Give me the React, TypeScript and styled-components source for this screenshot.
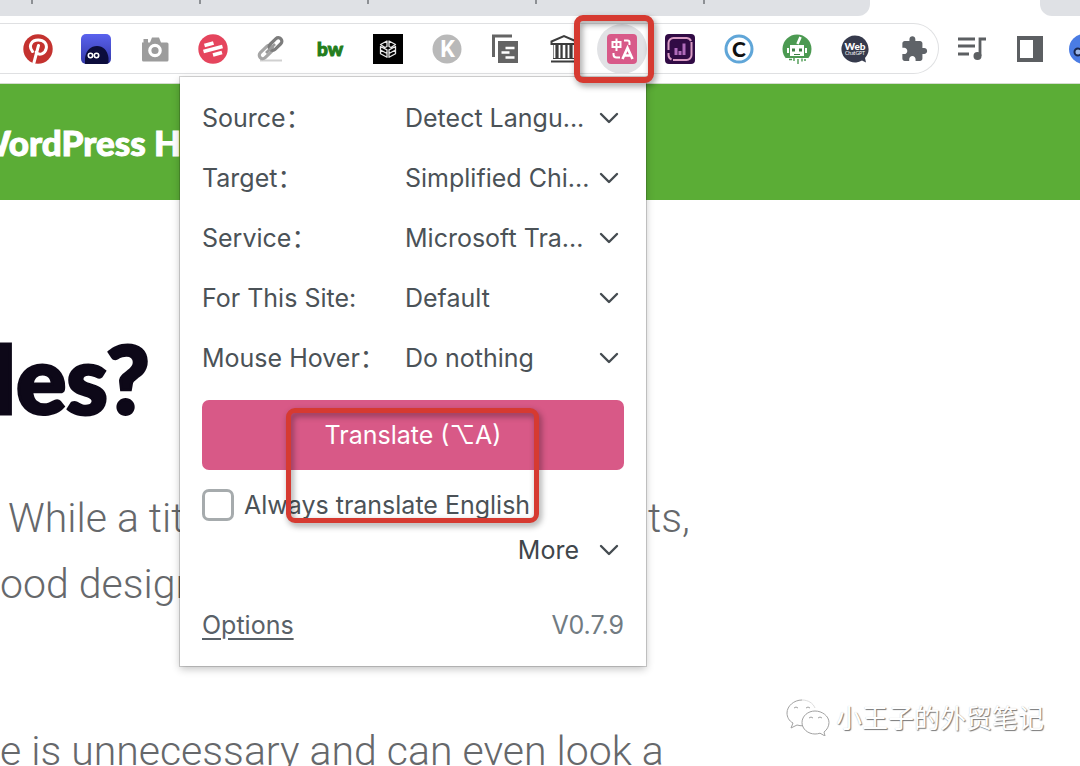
import React from "react";
import styled, { createGlobalStyle } from "styled-components";

const GlobalStyle = createGlobalStyle`
  * { box-sizing: border-box; }
  body {
    margin: 0;
    background: #fff;
    overflow: hidden;
    font-family: Inter, "Noto Sans CJK SC", sans-serif;
  }
`;

const Screen = styled.div`
  position: relative;
  height: 100vh;
  overflow: hidden;
`;

/* ---------- browser chrome ---------- */

const TabStrip = styled.div`
  display: flex;
  justify-content: space-between;
  height: 16px;
`;

const Tabs = styled.div`
  display: flex;
  flex: 1;
  gap: 166px;
  padding-left: 31px;
  background: #dfe1e5;
  border-radius: 0 0 12px 0;
`;

const TabDivider = styled.span`
  width: 2px;
  height: 4px;
  background: #8d9094;
`;

const TabStripEnd = styled.div`
  width: 40px;
  margin-left: 170px;
  background: #dfe1e5;
  border-radius: 0 0 0 12px;
`;

const Toolbar = styled.div`
  display: flex;
  align-items: center;
  height: 68px;
  padding-bottom: 2px;
  border-bottom: 1px solid #d5dccf;
`;

const Extensions = styled.div`
  display: flex;
  flex: 1;
  align-items: center;
  justify-content: space-between;
  height: 51px;
  padding: 0 9px 0 23px;
  border: 1px solid #dfe0e2;
  border-left: 0;
  border-radius: 0 26px 26px 0;
`;

const BrowserActions = styled.div`
  display: flex;
  flex: none;
  gap: 26px;
  width: 141px;
  padding-left: 18px;
  overflow: hidden;
`;

const IconButton = styled.button<{ $active?: boolean }>`
  display: flex;
  flex: none;
  width: 30px;
  height: 30px;
  padding: 0;
  border: 0;
  border-radius: 50%;
  background: ${(p) => (p.$active ? "#e1e2e5" : "none")};
  box-shadow: ${(p) => (p.$active ? "0 0 0 10px #e1e2e5" : "none")};
  svg { display: block; width: 30px; height: 30px; }
`;

/* ---------- web page ---------- */

const SiteBar = styled.header`
  display: flex;
  align-items: center;
  height: 116px;
  background: #5bad36;
  color: #fff;
  font: 900 35px/40px Lato, sans-serif;
  -webkit-text-stroke: 1px #fff;
  white-space: pre;
`;

const SiteName = styled.span`
  margin-left: -26px;
`;

const Article = styled.main`
  padding-top: 133px;
  color: #66686b;
  font: 300 41px/66px Roboto, sans-serif;
  white-space: nowrap;
`;

const Title = styled.h1`
  margin: 0 0 62px -8px;
  color: #0d0818;
  font: 900 94px/90px Lato, sans-serif;
  -webkit-text-stroke: 3px #0d0818;
`;

const Paragraph = styled.p`
  margin: 0 0 101px;
`;

const Line = styled.span`
  display: flex;
`;

const LineStart = styled.span<{ $indent?: boolean }>`
  width: 648px;
  padding-left: ${(p) => (p.$indent ? "8px" : "0")};
`;

/* ---------- extension popup ---------- */

const Popup = styled.section`
  position: absolute;
  top: 77px;
  left: 180px;
  width: 466px;
  padding: 11px 22px 26px;
  background: #fff;
  color: #4b5257;
  font-size: 25px;
  line-height: 30px;
  box-shadow: 0 0 0 1px rgba(0, 0, 0, 0.16), 0 3px 8px rgba(0, 0, 0, 0.24);
`;

const Field = styled.div`
  display: flex;
  align-items: center;
  height: 60px;
`;

const FieldLabel = styled.label`
  width: 203px;
  white-space: nowrap;
`;

const SelectWrap = styled.div`
  position: relative;
  display: flex;
  flex: 1;
  align-items: center;
`;

const Select = styled.select`
  width: 100%;
  height: 40px;
  padding: 0;
  border: 0;
  appearance: none;
  background: none;
  color: inherit;
  font: inherit;
`;

const ChevronSlot = styled.span`
  position: absolute;
  right: 5px;
  display: flex;
  pointer-events: none;
`;

const TranslateButton = styled.button`
  display: block;
  width: 100%;
  height: 70px;
  margin-top: 12px;
  border: 0;
  border-radius: 7px;
  background: #d85987;
  color: #fff;
  font: inherit;
  font-family: Inter, "DejaVu Sans", sans-serif;
`;

const AlwaysRow = styled.label`
  display: flex;
  align-items: center;
  gap: 10px;
  height: 32px;
  margin-top: 19px;
`;

const Checkbox = styled.input`
  width: 32px;
  height: 32px;
  margin: 0;
  appearance: none;
  border: 3px solid #a6abad;
  border-radius: 7px;
  background: #fff;
`;

const MoreButton = styled.button`
  display: flex;
  align-items: center;
  gap: 20px;
  margin: 14px 0 0 auto;
  padding: 0 5px 0 0;
  border: 0;
  background: none;
  color: #3f464b;
  font: inherit;
`;

const PopupFooter = styled.footer`
  display: flex;
  justify-content: space-between;
  margin-top: 45px;
  color: #717b82;
`;

const OptionsLink = styled.a`
  color: #596168;
  text-underline-offset: 4px;
`;

/* ---------- annotations ---------- */

const Marker = styled.div`
  position: absolute;
  border: 6px solid #d63a31;
  border-radius: 9px;
  filter: drop-shadow(2px 3px 3px rgba(0, 0, 0, 0.4));
  pointer-events: none;
`;

const IconMarker = styled(Marker)`
  top: 15px;
  left: 574px;
  width: 80px;
  height: 68px;
`;

const TranslateMarker = styled(Marker)`
  top: 408px;
  left: 286px;
  width: 253px;
  height: 115px;
  border-width: 5px;
`;

const Watermark = styled.div`
  position: absolute;
  right: 36px;
  bottom: 29px;
  display: flex;
  align-items: center;
  gap: 6px;
  color: #fff;
  font: 400 26px/40px "Noto Sans CJK SC", sans-serif;
  text-shadow: 1px 1px 1px #777, 0 0 1px #ccc;
`;

const Chevron = () => (
  <svg width="20" height="12" viewBox="0 0 20 12" fill="none" stroke="#454c51" strokeWidth="2.4" strokeLinecap="round" strokeLinejoin="round">
    <path d="M2 2l8 8 8-8" />
  </svg>
);

const extensions: { name: string; active?: boolean; art: React.ReactNode }[] = [
  {
    name: "Pinterest",
    art: (
      <>
        <circle cx="15" cy="15" r="14.7" fill="#c4322f" />
        <path d="M9.5 17.5C5 12 8.500 6 15.200 6c6 0 9 4 8 8.500-1 5.500-7.500 7.500-10 3.500M15.500 11.500L11 28.500" fill="none" stroke="#fff" strokeWidth="3" strokeLinecap="round" />
      </>
    ),
  },
  {
    name: "Peeking ghost",
    art: (
      <>
        <defs>
          <linearGradient id="dusk" x1="0" y1="0" x2="0" y2="1">
            <stop offset="0" stopColor="#5a62ee" />
            <stop offset="1" stopColor="#3338a8" />
          </linearGradient>
          <clipPath id="tile"><rect width="30" height="30" rx="5" /></clipPath>
        </defs>
        <g clipPath="url(#tile)">
          <rect width="30" height="30" fill="url(#dusk)" />
          <path d="M4 30V24C5 16 10 12 16 12s10.500 4 11.500 12v6z" fill="#0c0d3c" />
          <g fill="none" stroke="#fff" strokeWidth="1.6">
            <circle cx="9.500" cy="21.500" r="2.200" />
            <circle cx="15.500" cy="21.500" r="2.200" />
          </g>
        </g>
      </>
    ),
  },
  {
    name: "Screenshot",
    art: (
      <>
        <path d="M2 8.500h8l2-5h7l2 5h6a1.500 1.500 0 0 1 1.500 1.500v16a1.500 1.500 0 0 1-1.500 1.500H3.500A1.500 1.500 0 0 1 2 26zM3.500 5H8v4H3.500z" fill="#9c9c9c" />
        <circle cx="15" cy="16.500" r="5.200" fill="#9c9c9c" stroke="#fff" strokeWidth="3.200" />
      </>
    ),
  },
  {
    name: "Stripes",
    art: (
      <>
        <circle cx="15" cy="15" r="14.700" fill="#e5455d" />
        <path d="M6.500 11.500L15.500 9M5.500 17.500L24.500 12.500M15 21l9-2.500" stroke="#fff" strokeWidth="3.800" />
      </>
    ),
  },
  {
    name: "Link checker",
    art: (
      <>
        <path d="M3 26.500h22" stroke="#d0d0d0" strokeWidth="2" />
        <g fill="none" strokeWidth="3.200">
          <rect x="1" y="14.500" width="16" height="7" rx="3.500" transform="rotate(-44 9 18)" stroke="#a6a6a6" />
          <rect x="11" y="6.500" width="15" height="7" rx="3.500" transform="rotate(-44 18.500 10)" stroke="#7c7c7c" />
          <path d="M9 19l9-9" stroke="#9a9a9a" strokeWidth="2.600" />
        </g>
      </>
    ),
  },
  {
    name: "BuiltWith",
    art: <text x="15" y="22" textAnchor="middle" fontFamily="Lato, sans-serif" fontWeight="900" fontSize="19" fill="#247d1c" stroke="#247d1c">bw</text>,
  },
  {
    name: "Cube",
    art: (
      <>
        <rect width="30" height="30" fill="#000" />
        <g fill="none" stroke="#e8e8e8" strokeWidth="1.300" strokeLinejoin="round">
          <path d="M7.500 12.500l6.500 3.300v7.500l-6.500-3.500zM22.500 12.500L16 15.800v7.500l6.500-3.500zM7.500 10.500L14 7v5.500l-2 1zM22.500 10.500L16 7v5.500l2 1zM7.500 16l6.500 3.500M22.500 16L16 19.500" />
        </g>
      </>
    ),
  },
  {
    name: "Keywords",
    art: (
      <>
        <circle cx="15" cy="15" r="14.500" fill="#b9b9b9" />
        <text x="15.500" y="23" textAnchor="middle" fontFamily="Roboto, sans-serif" fontWeight="700" fontSize="23" fill="#fff">K</text>
      </>
    ),
  },
  {
    name: "Copy pages",
    art: (
      <>
        <path d="M3.500 23V2H22" fill="none" stroke="#646464" strokeWidth="3" />
        <path d="M8 7h20v22H8z" fill="#646464" />
        <path d="M15.500 14h9M11.500 18.500h8M15.500 23.500h9" stroke="#fff" strokeWidth="2.400" />
      </>
    ),
  },
  {
    name: "Archive",
    art: (
      <>
        <path d="M2.500 7.500L15 2l12.500 5.500V10h-25zM2 27.500h26" fill="#fff" stroke="#3c3c3c" strokeWidth="2" />
        <path d="M4 10h22v15H4z" fill="#3c3c3c" />
        <path d="M5.500 11v13M10.500 11v13M19.500 11v13M24.500 11v13" stroke="#fff" strokeWidth="1.800" />
        <path d="M15 11v13" stroke="#fff" strokeWidth="2.600" />
      </>
    ),
  },
  {
    name: "Immersive Translate",
    active: true,
    art: (
      <>
        <rect width="30" height="30" rx="4" fill="#d85a89" />
        <g fill="none" stroke="#fff" strokeWidth="2">
          <path d="M5.500 8h8v5h-8zM9.500 4.500V17M17 6.500h3.500q2 0 2 2V11M6.500 19v1.500a3 3 0 0 0 3 3H13" />
          <path d="M15.500 25l5-11 5 11M17.500 21.500h6" strokeWidth="2.600" />
        </g>
      </>
    ),
  },
  {
    name: "Analytics",
    art: (
      <>
        <rect width="30" height="30" rx="4" fill="#310b45" />
        <path d="M3.500 16V9a5 5 0 0 1 5-5H22M8 26h13.500a5 5 0 0 0 5-5V8M22 4a5 5 0 0 1 4 3M3.500 19v2a5 5 0 0 0 3 4.500" fill="none" stroke="#d99cc4" strokeWidth="2" />
        <path d="M11 14v7M15 17v4M19 9.500V21" stroke="#b06bbb" strokeWidth="3" />
      </>
    ),
  },
  {
    name: "Circle C",
    art: (
      <>
        <circle cx="15" cy="15" r="13" fill="#fff" stroke="#60a6d8" strokeWidth="3" />
        <text x="15" y="22.500" textAnchor="middle" fontFamily="Lato, sans-serif" fontWeight="900" fontSize="21" fill="#101010">C</text>
      </>
    ),
  },
  {
    name: "Robot",
    art: (
      <>
        <circle cx="15" cy="15" r="14.500" fill="#4c9a52" />
        <path d="M15.500 10l3-7" stroke="#fff" strokeWidth="2.600" />
        <path d="M8 11h14v11H8zM5 14h2v5H5zM23 14h2v5h-2zM4 24h22v6H4z" fill="#fff" />
        <path d="M10 14.500h3v3h-3zM17 14.500h3v3h-3zM12 20h6v1h-6z" fill="#3f7f45" />
        <path d="M7 25.500h3M12 24v3M16 25v5M20 24.500v3M22 26h2" stroke="#4c9a52" strokeWidth="1.400" />
      </>
    ),
  },
  {
    name: "WebChatGPT",
    art: (
      <>
        <path d="M15 1.500a13.500 13.500 0 1 0 7 25l4 2-1-4.500A13.500 13.500 0 0 0 15 1.500z" fill="#363a4c" />
        <text x="15" y="15.500" textAnchor="middle" fontFamily="Lato, sans-serif" fontWeight="900" fontSize="10" fill="#fff">Web</text>
        <text x="15" y="21" textAnchor="middle" fontFamily="Lato, sans-serif" fontWeight="400" fontSize="5" fill="#fff">ChatGPT</text>
      </>
    ),
  },
  {
    name: "Extensions",
    art: (
      <path
        transform="translate(1 1) scale(1.180)"
        d="M20.500 11H19V7c0-1.100-.9-2-2-2h-4V3.500C13 2.120 11.880 1 10.500 1S8 2.120 8 3.500V5H4c-1.100 0-1.990.9-1.990 2v3.800H3.500c1.490 0 2.700 1.210 2.700 2.700s-1.210 2.700-2.700 2.700H2V20c0 1.100.9 2 2 2h3.800v-1.500c0-1.490 1.210-2.700 2.700-2.700 1.490 0 2.700 1.210 2.700 2.700V22H17c1.100 0 2-.9 2-2v-4h1.500c1.380 0 2.500-1.120 2.500-2.500S21.880 11 20.500 11z"
        fill="#5f6368"
      />
    ),
  },
];

const actions = [
  {
    name: "Media controls",
    art: (
      <>
        <path d="M1 5h17M1 12h17M1 20h11" stroke="#5c5f62" strokeWidth="2.800" />
        <path d="M23 22V5h6" fill="none" stroke="#5c5f62" strokeWidth="2.800" />
        <circle cx="20.500" cy="22" r="4" fill="#5c5f62" />
      </>
    ),
  },
  {
    name: "Side panel",
    art: <path fillRule="evenodd" d="M4 2h26v26H4zM7 6v18h13V6z" fill="#5c5f62" />,
  },
  {
    name: "Profile",
    art: (
      <>
        <circle cx="15" cy="15" r="15" fill="#4a7ce4" />
        <circle cx="9" cy="18" r="3.500" fill="#9db8e8" stroke="#17264f" strokeWidth="2" />
      </>
    ),
  },
];

const fields = [
  { id: "source", label: "Source：", value: "Detect Langu..." },
  { id: "target", label: "Target：", value: "Simplified Chi..." },
  { id: "service", label: "Service：", value: "Microsoft Tra..." },
  { id: "site", label: "For This Site:", value: "Default" },
  { id: "hover", label: "Mouse Hover：", value: "Do nothing" },
];

export default function App() {
  return (
    <Screen>
      <GlobalStyle />
      <TabStrip>
        <Tabs>
          {[0, 1, 2, 3, 4].map((n) => <TabDivider key={n} />)}
        </Tabs>
        <TabStripEnd />
      </TabStrip>
      <Toolbar>
        <Extensions>
          {extensions.map((e) => (
            <IconButton key={e.name} $active={e.active} aria-label={e.name}>
              <svg viewBox="0 0 30 30">{e.art}</svg>
            </IconButton>
          ))}
        </Extensions>
        <BrowserActions>
          {actions.map((a) => (
            <IconButton key={a.name} aria-label={a.name}>
              <svg viewBox="0 0 30 30">{a.art}</svg>
            </IconButton>
          ))}
        </BrowserActions>
      </Toolbar>

      <SiteBar>
        <SiteName>WordPress H</SiteName>
      </SiteBar>
      <Article>
        <Title>les?</Title>
        <Paragraph>
          <Line>
            <LineStart $indent>While a tit</LineStart>
            <span>ts,</span>
          </Line>
          <Line>
            <LineStart>ood design</LineStart>
          </Line>
        </Paragraph>
        <Paragraph>e is unnecessary and can even look a</Paragraph>
      </Article>

      <Popup>
        {fields.map((f) => (
          <Field key={f.id}>
            <FieldLabel htmlFor={f.id}>{f.label}</FieldLabel>
            <SelectWrap>
              <Select id={f.id}>
                <option>{f.value}</option>
              </Select>
              <ChevronSlot><Chevron /></ChevronSlot>
            </SelectWrap>
          </Field>
        ))}
        <TranslateButton>Translate (⌥A)</TranslateButton>
        <AlwaysRow>
          <Checkbox type="checkbox" />
          Always translate English
        </AlwaysRow>
        <MoreButton>
          More
          <Chevron />
        </MoreButton>
        <PopupFooter>
          <OptionsLink href="#options">Options</OptionsLink>
          <span>V0.7.9</span>
        </PopupFooter>
      </Popup>

      <IconMarker />
      <TranslateMarker />

      <Watermark>
        <svg width="44" height="38" viewBox="0 0 44 38" fill="#fff" stroke="#a2a2a2" strokeWidth="1">
          <path d="M16 2C8 2 1 8 1 15c0 4 2 8 6 10l-2 5 6-3c2 .6 4 .8 6 .8" />
          <path d="M16 2c6 0 11 3 13 8" stroke="#ddd" />
          <path d="M29 13c-7 0-13 5-13 11.500S22 36 29 36c2 0 3-.3 5-.8l5 2.800-1-4c3-2 5-6 5-9.500C43 18 36 13 29 13z" />
          <path d="M8 10q2-2 4 0M20 10q2-2 4 0M23 20q2-2 4 0M32 20q2-2 4 0" fill="none" />
        </svg>
        小王子的外贸笔记
      </Watermark>
    </Screen>
  );
}
